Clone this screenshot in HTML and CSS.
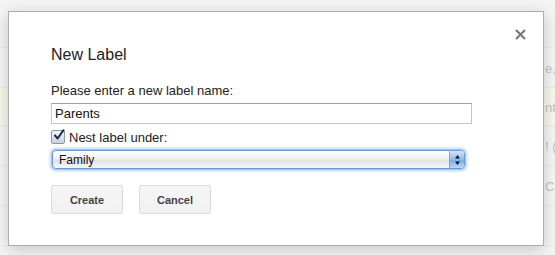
FILE: index.html
```html
<!DOCTYPE html>
<html>
<head>
<meta charset="utf-8">
<link rel="stylesheet" href="styles.css">
</head>
<body>
<div class="page">
  <div class="rows">
    <div class="row row-top"></div>
    <div class="row"><span class="bgtext">e,</span></div>
    <div class="row row-yellow"><span class="bgtext">nt</span></div>
    <div class="row"><span class="bgtext">! (</span></div>
    <div class="row"><span class="bgtext">CA</span></div>
    <div class="row"></div>
  </div>
  <div class="dialog">
    <button class="close" aria-label="Close">
      <svg width="11" height="11" viewBox="0 0 11 11"><path d="M1 1L10 10M10 1L1 10" stroke="#7a7a7a" stroke-width="2.2" fill="none"/></svg>
    </button>
    <div class="title">New Label</div>
    <div class="label">Please enter a new label name:</div>
    <div class="input">Parents</div>
    <div class="check-row">
      <span class="checkbox">
        <svg width="13" height="13" viewBox="0 0 13 13"><path d="M3 6.5L5.6 9.5L11.5 1.2" stroke="#1e2a4a" stroke-width="2" fill="none" stroke-linecap="round" stroke-linejoin="round"/></svg>
      </span>
      <span class="check-text">Nest label under:</span>
    </div>
    <div class="select">
      <span class="select-text">Family</span>
      <span class="arrows">
        <svg width="7" height="12" viewBox="0 0 7 12"><path d="M3.5 1L6 4.5H1Z M3.5 11L6 7.5H1Z" fill="#111"/></svg>
      </span>
    </div>
    <div class="buttons">
      <button class="btn">Create</button>
      <button class="btn">Cancel</button>
    </div>
  </div>
</div>
</body>
</html>
```
FILE: styles.css
```css
html, body {
  margin: 0;
  padding: 0;
}
body {
  width: 555px;
  height: 255px;
  overflow: hidden;
  background: #f6f6f6;
  font-family: "Liberation Sans", Arial, sans-serif;
}
.page {
  position: relative;
  width: 555px;
  height: 255px;
}
.rows {
  display: flex;
  flex-direction: column;
}
.row {
  border-bottom: 1px solid #ececec;
  display: flex;
  align-items: center;
  justify-content: flex-end;
  background: #f7f7f7;
  padding-top: 2px;
  box-sizing: border-box;
  height: 40px;
}
.row-top {
  height: 48px;
  background: #f5f5f5;
}
.row-yellow {
  background: #f9f9ee;
  height: 38px;
}
.bgtext {
  color: #c4c4c4;
  font-size: 13px;
  width: 12px;
  margin-right: -2px;
  white-space: nowrap;
  overflow: hidden;
}
.dialog {
  position: absolute;
  left: 8px;
  top: 11px;
  height: 233px;
  background: #fff;
  border: 1px solid #acacac;
  box-shadow: 0 4px 16px rgba(0,0,0,0.2);
  padding: 0 0 0 42px;
  box-sizing: content-box;
  width: 492px;
}
.close {
  position: absolute;
  right: 17px;
  top: 17px;
  width: 11px;
  height: 11px;
  padding: 0;
  border: 0;
  background: transparent;
  display: flex;
}
.title {
  margin-top: 33px;
  font-size: 16px;
  line-height: 20px;
  color: #222;
}
.label {
  margin-top: 18px;
  font-size: 13px;
  line-height: 16px;
  color: #222;
}
.input {
  margin-top: 4px;
  width: 413px;
  height: 19px;
  border: 1px solid #c6c6c6;
  border-top-color: #a0a0a0;
  padding: 0 3px;
  font-size: 13px;
  line-height: 19px;
  color: #111;
}
.check-row {
  margin-top: 5px;
  display: flex;
  align-items: center;
  height: 16px;
}
.checkbox {
  width: 12px;
  height: 12px;
  border: 1px solid #8e95a3;
  border-radius: 2px;
  background: linear-gradient(#f4f6fb, #c9d1e0);
  display: flex;
  position: relative;
}
.checkbox svg {
  position: absolute;
  left: 0;
  top: -2px;
}
.check-text {
  margin-left: 4px;
  font-size: 13px;
  color: #222;
}
.select {
  margin-top: 5px;
  width: 411px;
  height: 17px;
  border: 1px solid #6a9ad6;
  border-radius: 4px;
  box-shadow: 0 0 0 1px #a6c8f0, 0 0 3px 2px #b7d4f5;
  background: linear-gradient(#ffffff, #f0f0f0 45%, #e2e2e2 55%, #f7f7f7);
  display: flex;
  align-items: center;
  justify-content: space-between;
  overflow: hidden;
  margin-left: 1px;
}
.select-text {
  font-size: 12px;
  padding-left: 6px;
  color: #111;
}
.arrows {
  width: 14px;
  height: 17px;
  border-left: 1px solid #7ea7d9;
  background: linear-gradient(#d6e7fb, #8dbcf0 50%, #78aeec 55%, #bcd8f7);
  display: flex;
  align-items: center;
  justify-content: center;
}
.buttons {
  margin-top: 16px;
  display: flex;
  gap: 16px;
}
.btn {
  width: 72px;
  height: 29px;
  border: 1px solid #dcdcdc;
  border-radius: 2px;
  background: linear-gradient(#f5f5f5, #f1f1f1);
  font-family: "Liberation Sans", Arial, sans-serif;
  font-size: 11px;
  font-weight: bold;
  color: #444;
  padding: 0;
}
```
